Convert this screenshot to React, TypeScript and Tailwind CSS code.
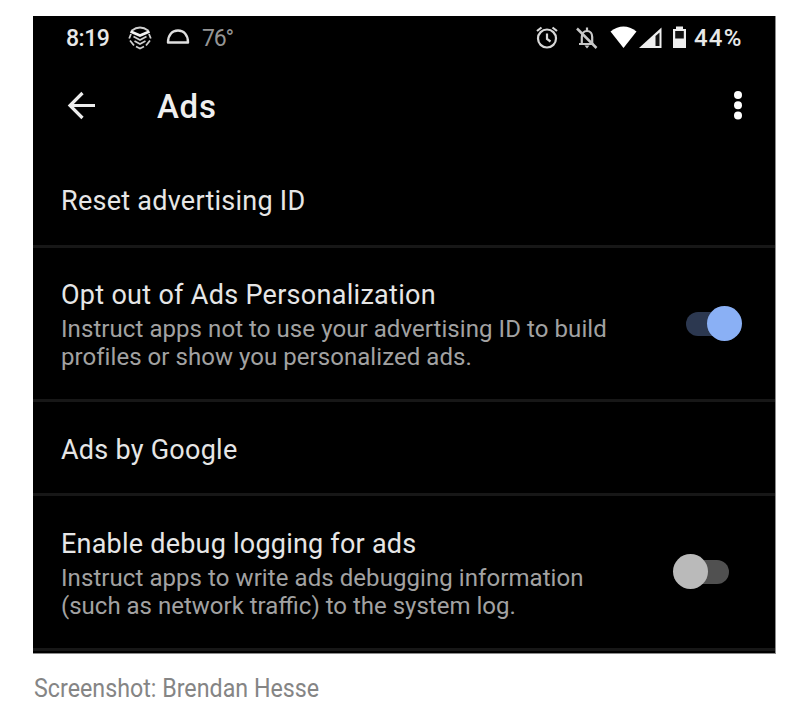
import React from "react";

interface Setting {
  title: string;
  titleClass: string;
  lines: { text: string; className: string }[];
  rowClass: string;
  toggle?: "on" | "off";
}

const settings: Setting[] = [
  {
    title: "Reset advertising ID",
    titleClass: "tracking-[0.25px]",
    lines: [],
    rowClass: "h-24 pt-8",
  },
  {
    title: "Opt out of Ads Personalization",
    titleClass: "tracking-[0.29px]",
    lines: [
      {
        text: "Instruct apps not to use your advertising ID to build",
        className: "tracking-[0.07px]",
      },
      {
        text: "profiles or show you personalized ads.",
        className: "tracking-[0.05px]",
      },
    ],
    rowClass: "h-[154px] pt-[30px]",
    toggle: "on",
  },
  {
    title: "Ads by Google",
    titleClass: "tracking-[0.25px]",
    lines: [],
    rowClass: "h-[94px] pt-[31px]",
  },
  {
    title: "Enable debug logging for ads",
    titleClass: "tracking-[0.22px]",
    lines: [
      {
        text: "Instruct apps to write ads debugging information",
        className: "tracking-[0.07px]",
      },
      {
        text: "(such as network traffic) to the system log.",
        className: "tracking-normal",
      },
    ],
    rowClass: "h-[155px] pt-[31px]",
    toggle: "off",
  },
];

const StatusBar = () => {
  return (
    <div className="h-11 flex items-center pl-[33px] text-[#e8e8e8]">
      <span className="w-[62px] text-[23px] font-medium leading-none tracking-[-0.5px]">8:19</span>
      <svg className="w-6 h-6" viewBox="0 0 24 24" fill="none" stroke="#d0d0d0" strokeWidth="1.8">
        <path d="M3.500 4.800Q8 1.500 12 1.500t8.500 3.300" />
        <path d="M2.500 5.500 12 9.500 21.500 5.500" stroke="#f4f4f4" strokeWidth="2.600" />
        <path d="M5.500 10.500 12 14l6.500-3.500M6.500 15l5.500 3 5.500-3M8 20.500l4 2 4-2" />
        <path d="M3 8 1.200 12.500M2 14.500l4 5M21 8l1.800 4.500M22 14.500l-4 5" />
      </svg>
      <svg className="w-6 h-6 ml-[14px]" viewBox="0 0 24 24" fill="none" stroke="#e0e0e0" strokeWidth="2.400">
        <path d="M2 16.500C2 9 6 4.500 12 4.500s10 4.500 10 12z" strokeLinejoin="round" />
      </svg>
      <span className="ml-3 text-[23px] leading-none tracking-[-1.2px] text-[#959595]">76°</span>

      <svg className="w-6 h-6 ml-auto" viewBox="0 0 24 24" fill="none" stroke="#d8d8d8" strokeWidth="2.200">
        <circle cx="12" cy="12.500" r="9" />
        <path d="M12 7.500v5.500l3.500 2.500M2 5 6.500 1.500M22 5 17.500 1.500" />
      </svg>
      <svg className="w-6 h-6 ml-4" viewBox="0 0 24 24" fill="none" stroke="#c8c8c8" strokeWidth="2.200">
        <path d="M6.800 17.500V11c0-3.500 2-6 5.200-6s5.200 2.500 5.200 6v6M4 18h14.500M12 1.500V5" />
        <path d="M2 2.500l19.500 19.500" strokeWidth="2.500" />
        <path d="M9.500 19.500h5l-2.500 3z" fill="#c8c8c8" stroke="none" />
      </svg>
      <svg className="w-[27px] h-6 ml-[11px]" viewBox="0 0 27 24">
        <path d="M.5 5.500Q13.500-4.500 26.500 5.500L13.500 22z" fill="#fff" />
      </svg>
      <svg className="w-[23px] h-6 ml-[2px]" viewBox="0 0 23 24">
        <path d="M0 22 22.500 1.500V22z" fill="#eee" />
        <path d="M16.500 10 20.500 6.500V20h-4z" fill="#111" />
      </svg>
      <svg className="w-[15px] h-6 ml-[10px]" viewBox="0 0 15 24">
        <path d="M4 .5h7V3h3v19H1V3h3z" fill="#eee" />
        <path d="M3.200 5h8.600v7.500H3.200z" fill="#111" />
      </svg>
      <span className="w-[88px] pl-[7px] text-[24px] font-medium leading-none tracking-[1.2px]">44%</span>
    </div>
  );
};

const Toolbar = () => {
  return (
    <div className="h-[92px] flex items-center pl-[34px] pr-8">
      <svg className="w-[30px] h-[30px]" viewBox="0 0 30 30" fill="none" stroke="#ececec" strokeWidth="3.200">
        <path d="M28 14.500H2.500M15.500 2 3 14.500 15.500 27" />
      </svg>
      <h1 className="ml-[60px] pt-px text-[33px] leading-10 font-medium tracking-[0.7px] text-[#efefef]">Ads</h1>
      <svg className="w-2.5 h-[30px] ml-auto" viewBox="0 0 10 30" fill="#fff">
        <circle cx="5" cy="4" r="4" />
        <circle cx="5" cy="14.300" r="4" />
        <circle cx="5" cy="24.600" r="4" />
      </svg>
    </div>
  );
};

const Toggle = ({ on }: { on: boolean }) => {
  return on ? (
    <div className="mt-7 mr-[33px] w-14 h-[35px] flex items-center">
      <div className="w-10 h-6 rounded-full bg-[#2c3850]" />
      <div className="-ml-[19px] shrink-0 w-[35px] h-[35px] rounded-full bg-[#8ab0f5]" />
    </div>
  ) : (
    <div className="mt-[27px] mr-[46px] w-14 h-[35px] flex items-center">
      <div className="z-10 shrink-0 w-[35px] h-[35px] rounded-full bg-[#bababa]" />
      <div className="-ml-[19px] w-10 h-6 rounded-full bg-[#505050]" />
    </div>
  );
};

const SettingRow = ({ item }: { item: Setting }) => {
  return (
    <div className={`flex justify-between border-b-3 border-[#171717] pl-7 whitespace-nowrap ${item.rowClass}`}>
      <div>
        <h2 className="text-[27px] leading-[34px] text-[#e6e6e6]">
          <span className={item.titleClass}>{item.title}</span>
        </h2>
        <div className="mt-[3px] text-[24px] leading-7 text-[#a2a2a2]">
          {item.lines.map((line) => (
            <p key={line.text}>
              <span className={line.className}>{line.text}</span>
            </p>
          ))}
        </div>
      </div>
      {item.toggle && <Toggle on={item.toggle === "on"} />}
    </div>
  );
};

const App = () => {
  return (
    <div className="w-[800px] h-[709px] overflow-hidden bg-white pl-[33px] pt-4 font-['Roboto',sans-serif]">
      <div className="w-[743px] h-[638px] overflow-hidden bg-black border-r border-b border-[#8c8c8c]">
        <StatusBar />
        <Toolbar />
        {settings.map((item) => (
          <SettingRow item={item} key={item.title} />
        ))}
      </div>
      <p className="mt-[19px] ml-px w-max origin-left scale-x-[0.93] text-[25px] leading-8 text-[#858585]">
        Screenshot: Brendan Hesse
      </p>
    </div>
  );
};

export default App;
